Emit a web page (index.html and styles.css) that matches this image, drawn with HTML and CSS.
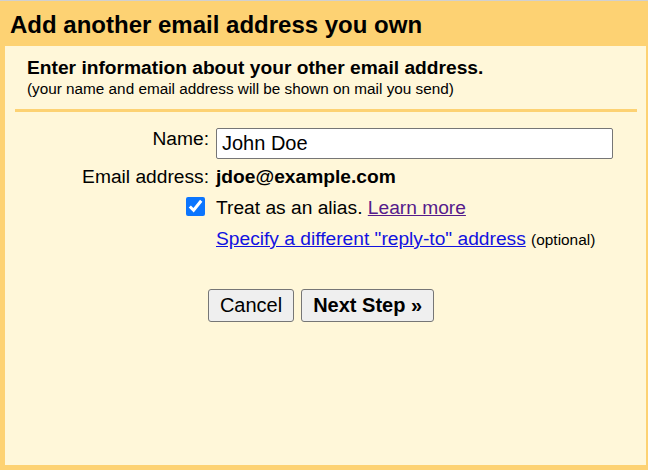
FILE: index.html
```html
<!DOCTYPE html>
<html>
<head>
<meta charset="utf-8">
<link rel="stylesheet" href="styles.css">
</head>
<body>
<div class="frame">
  <h1 class="title">Add another email address you own</h1>
  <div class="panel">
    <div class="intro">
      <div class="intro-main">Enter information about your other email address.</div>
      <div class="intro-sub">(your name and email address will be shown on mail you send)</div>
    </div>
    <div class="sep"></div>
    <div class="form">
      <div class="label label-name">Name:</div>
      <div class="field"><input class="text-input" type="text" value="John Doe"></div>
      <div class="label row-email">Email address:</div>
      <div class="field row-email email">jdoe@example.com</div>
      <div class="label check-cell"><input class="check" type="checkbox" checked></div>
      <div class="field row-alias">Treat as an alias. <a class="visited" href="#">Learn more</a></div>
      <div class="label"></div>
      <div class="field reply"><a class="link" href="#">Specify a different "reply-to" address</a> <span class="optional">(optional)</span></div>
    </div>
    <div class="buttons">
      <button class="btn">Cancel</button>
      <button class="btn btn-bold">Next Step »</button>
    </div>
  </div>
</div>
</body>
</html>
```
FILE: styles.css
```css
html, body {
  margin: 0;
  padding: 0;
  height: 100%;
}
body {
  font-family: "Liberation Sans", Arial, sans-serif;
  color: #000;
  background: #fdd273;
}
.frame {
  box-sizing: border-box;
  height: 470px;
  border-top: 1px solid #d0d0d0;
  background: #fdd273;
  padding: 0 2px 5px 5px;
  display: flex;
  flex-direction: column;
}
.title {
  margin: 0;
  height: 45px;
  box-sizing: border-box;
  padding: 6px 0 0 5px;
  font-size: 24px;
  font-weight: bold;
  line-height: 36px;
}
.panel {
  flex: 1;
  background: #fff7d9;
}
.intro {
  padding: 10px 0 0 22px;
  height: 52px;
  box-sizing: border-box;
}
.intro-main {
  font-size: 19.2px;
  font-weight: bold;
  line-height: 24px;
}
.intro-sub {
  font-size: 15.3px;
  line-height: 17px;
}
.sep {
  height: 3px;
  margin: 11px 9px 0 10px;
  background: #fdd273;
}
.form {
  display: grid;
  grid-template-columns: 204px 1fr;
  column-gap: 7px;
  margin-top: 16px;
  font-size: 19.2px;
}
.label {
  text-align: right;
}
.label-name {
  line-height: 22px;
}
.text-input {
  box-sizing: border-box;
  width: 397px;
  height: 31px;
  font-family: "Liberation Sans", Arial, sans-serif;
  font-size: 20px;
  padding: 0 5px;
  border: 1px solid #767676;
  border-radius: 2px;
  background: #fff;
  color: #000;
}
.row-email {
  margin-top: 5px;
  line-height: 26px;
}
.email {
  font-weight: bold;
}
.check-cell {
  margin-top: 7px;
  display: flex;
  justify-content: flex-end;
  align-items: flex-start;
}
.row-alias {
  margin-top: 5px;
  line-height: 26px;
}
.check {
  width: 19px;
  height: 19px;
  margin: 0 4px 0 0;
  accent-color: #0b75fe;
}
.reply {
  margin-top: 5px;
  line-height: 26px;
}
.visited {
  color: #551a8b;
}
.link {
  color: #1212e0;
}
.optional {
  font-size: 15.4px;
}
.buttons {
  display: flex;
  justify-content: center;
  gap: 7px;
  margin-top: 36px;
  padding-right: 9px;
}
.btn {
  font-family: "Liberation Sans", Arial, sans-serif;
  font-size: 20px;
  height: 33px;
  padding: 0 11px;
  background: #efefef;
  border: 1px solid #767676;
  border-radius: 3px;
  color: #000;
}
.btn-bold {
  font-weight: bold;
}
```
